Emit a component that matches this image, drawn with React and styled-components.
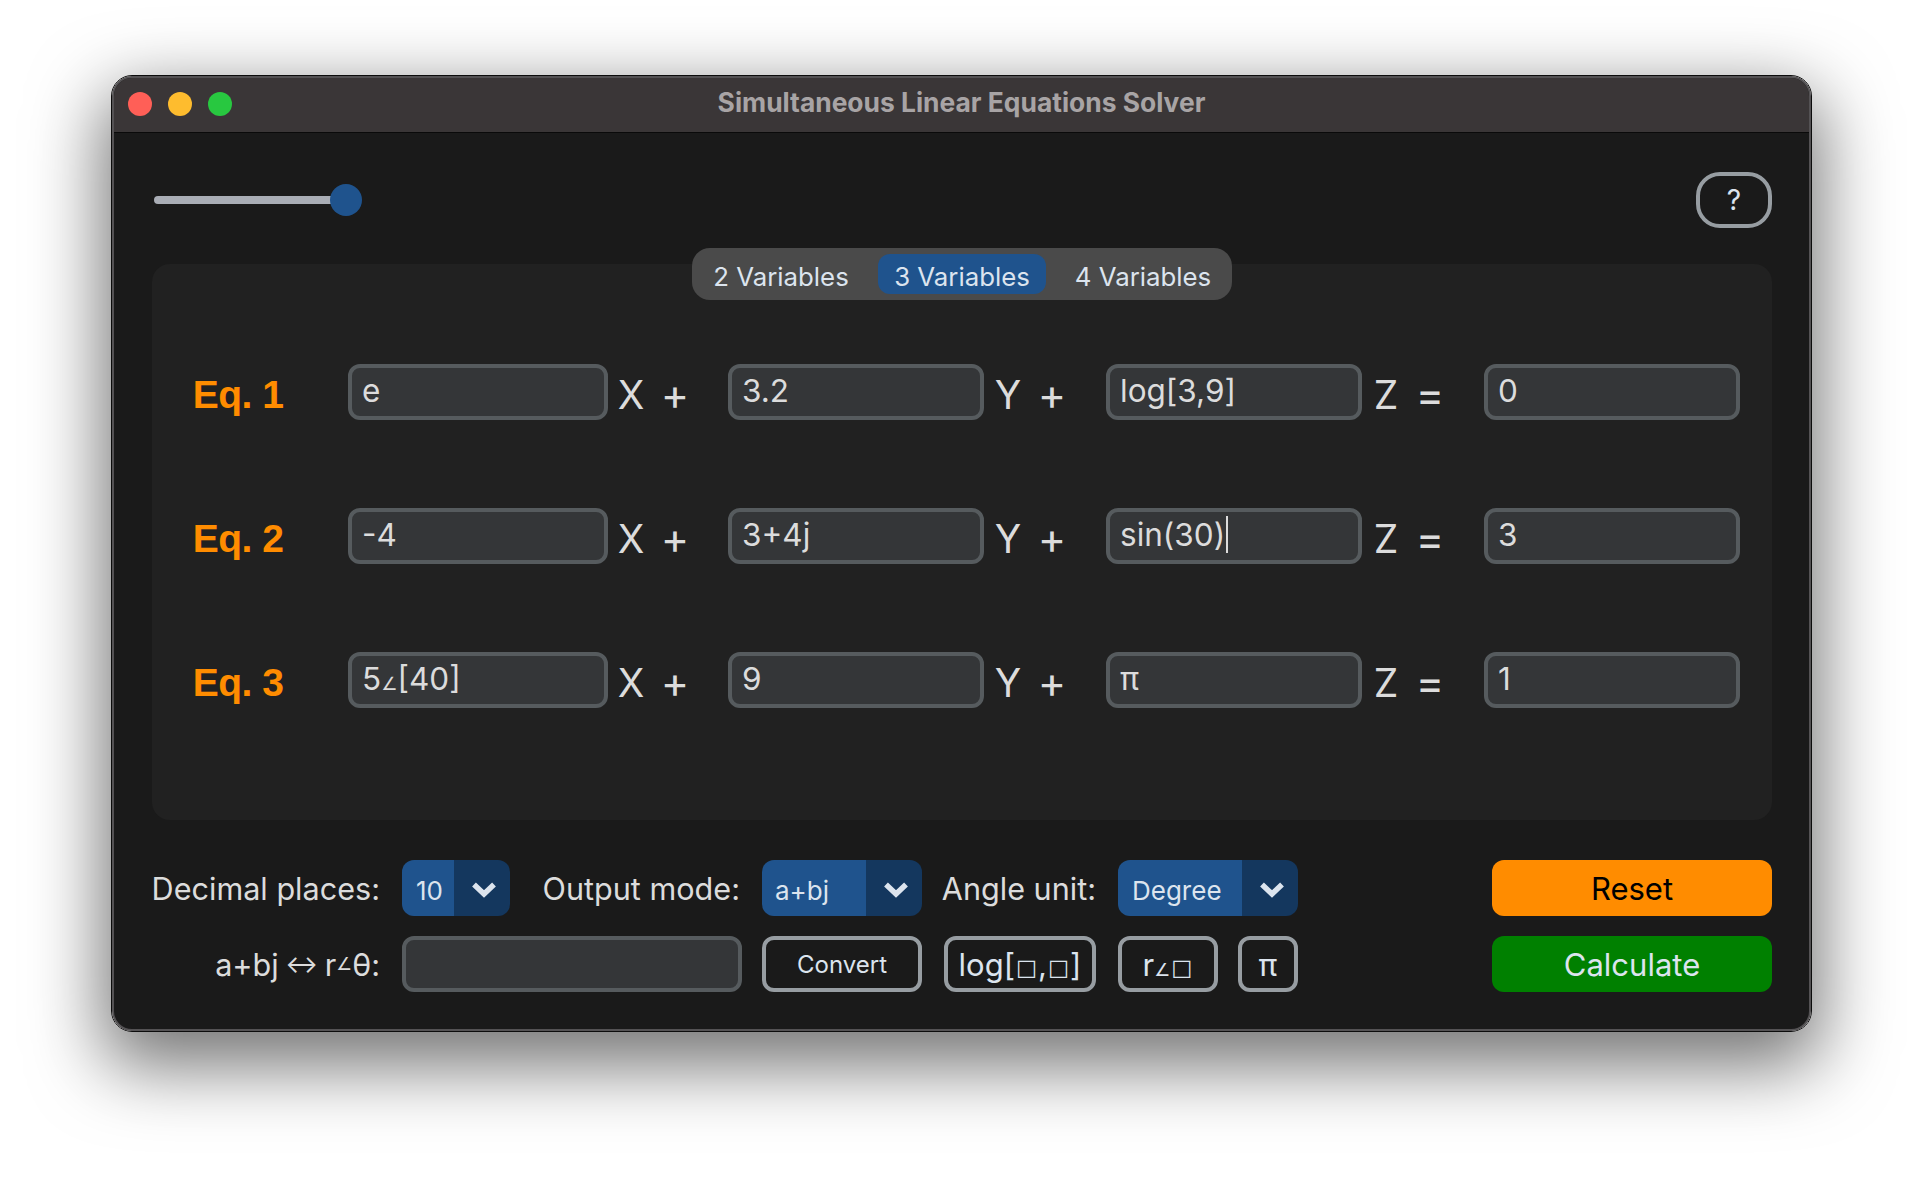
import React from "react";
import styled, { createGlobalStyle } from "styled-components";

const GlobalStyle = createGlobalStyle`
  html, body { margin: 0; padding: 0; background: #fff; }
  body { font-family: Inter, "Liberation Sans", sans-serif; overflow: hidden; }
`;

const Page = styled.div`
  width: 1924px;
  height: 1180px;
  padding: 75px 0 0 111px;
  box-sizing: border-box;
`;

const Window = styled.div`
  width: 1701px;
  box-sizing: border-box;
  border: 1px solid #0c0c0c;
  border-radius: 21px;
  box-shadow: 0 26px 72px 8px rgba(0, 0, 0, 0.55);
`;

const Frame = styled.div`
  border: 2px solid #545254;
  border-radius: 20px;
  overflow: hidden;
  background: #1a1a1a;
`;

const TitleBar = styled.div`
  height: 54px;
  border-bottom: 1px solid #0a0a0a;
  background: #3a3637;
  display: flex;
  align-items: center;
  position: relative;
  padding-left: 14px;
  gap: 16px;
`;

const Light = styled.span`
  width: 24px;
  height: 24px;
  margin-top: -2px;
  border-radius: 50%;
  background: ${(p) => p.$color};
`;

const Title = styled.div`
  position: absolute;
  left: 0;
  right: 0;
  text-align: center;
  font-size: 26.4px;
  font-weight: 700;
  color: #a8a4a5;
  margin-top: -6px;
`;

const Body = styled.div`
  padding: 39px 37px 37px 38px;
`;

const TopBar = styled.div`
  display: flex;
  justify-content: space-between;
  align-items: center;
  height: 56px;
`;

const Slider = styled.div`
  width: 208px;
  height: 32px;
  display: flex;
  align-items: center;
  justify-content: flex-end;
  position: relative;
  margin-left: 2px;
`;

const Track = styled.div`
  position: absolute;
  left: 0;
  right: 8px;
  height: 8px;
  border-radius: 4px;
  background: #a9adb5;
`;

const Thumb = styled.div`
  width: 32px;
  height: 32px;
  border-radius: 50%;
  background: #1f538d;
  position: relative;
`;

const HelpButton = styled.button`
  width: 76px;
  height: 56px;
  box-sizing: border-box;
  border: 4px solid #979da2;
  border-radius: 24px;
  background: transparent;
  color: #dce4ee;
  font-family: inherit;
  font-size: 28px;
  padding: 0;
`;

const Panel = styled.div`
  margin-top: 36px;
  height: 556px;
  background: #212121;
  border-radius: 18px;
`;

const Tabs = styled.div`
  width: 540px;
  height: 52px;
  box-sizing: border-box;
  margin: 0 auto;
  position: relative;
  top: -16px;
  background: #4a4a4a;
  border-radius: 18px;
  display: flex;
  align-items: center;
  justify-content: center;
`;

const Tab = styled.div`
  width: 168px;
  height: 40px;
  margin: 0 ${(p) => (p.$active ? "13px" : "0")};
  padding-top: 5px;
  box-sizing: border-box;
  display: flex;
  align-items: center;
  justify-content: center;
  border-radius: 12px;
  background: ${(p) => (p.$active ? "#1f538d" : "transparent")};
  color: #dce4ee;
  font-size: 25.8px;
  white-space: nowrap;
`;

const Equations = styled.div`
  margin-top: 48px;
  display: flex;
  flex-direction: column;
  gap: 88px;
`;

const EquationRow = styled.div`
  display: flex;
  align-items: center;
  height: 56px;
`;

const EqLabel = styled.div`
  width: 196px;
  box-sizing: border-box;
  padding-right: 24px;
  padding-top: 5px;
  text-align: center;
  color: #ff8c00;
  font-size: 39px;
  font-weight: 700;
  letter-spacing: -0.5px;
  font-family: "Liberation Sans", sans-serif;
`;

const Field = styled.div`
  width: ${(p) => p.$width || 256}px;
  height: 56px;
  box-sizing: border-box;
  border: 4px solid #565b5e;
  border-radius: 12px;
  background: #343638;
  color: #dcdcdc;
  font-size: 31.5px;
  line-height: 45px;
  padding-left: 10px;
  white-space: nowrap;
`;

const Caret = styled.span`
  display: inline-block;
  width: 2px;
  height: 37px;
  margin-left: 1px;
  vertical-align: -7px;
  background: #dcdcdc;
`;

const Term = styled.div`
  width: ${(p) => p.$width}px;
  margin-left: ${(p) => p.$nudge || 0}px;
  display: flex;
  align-items: center;
  color: #dcdcdc;
`;

const Variable = styled.span`
  width: 48px;
  text-align: center;
  font-size: 39px;
  padding-top: 5px;
`;

const Operator = styled.span`
  width: 40px;
  text-align: center;
  font-size: 43px;
  padding-top: 3px;
`;

const Small = styled.span`
  font-size: 0.58em;
  font-family: "DejaVu Sans", sans-serif;
`;

const Arrow = styled.span`
  font-size: 0.8em;
  margin: 0 -2px;
`;

const Blank = styled.span`
  font-size: 0.72em;
  margin: 0 1px;
  position: relative;
  top: -1px;
  font-family: "DejaVu Sans", sans-serif;
`;

const Footer = styled.div`
  margin-top: 40px;
  display: flex;
  justify-content: space-between;
`;

const Controls = styled.div`
  display: grid;
  grid-template-columns: 228px 338px 160px 152px 180px;
  grid-auto-rows: 56px;
  column-gap: 22px;
  row-gap: 20px;
`;

const Label = styled.div`
  display: flex;
  align-items: center;
  justify-content: flex-end;
  color: #dcdcdc;
  font-size: 30.6px;
  white-space: pre;
`;

const Cell = styled.div`
  display: flex;
  justify-content: space-between;
  align-items: center;
`;

const Select = styled.div`
  width: ${(p) => p.$width}px;
  height: 56px;
  display: flex;
  border-radius: 12px;
  overflow: hidden;
  color: #dce4ee;
  font-size: 26px;
`;

const SelectValue = styled.div`
  flex: 1;
  background: #1f538d;
  padding: 5px 0 0 ${(p) => p.$pad || 14}px;
  line-height: 51px;
`;

const SelectArrow = styled.div`
  width: 56px;
  background: #14375e;
  display: flex;
  align-items: center;
  justify-content: center;
  padding: 2px 0 0 3px;
  box-sizing: border-box;
`;

const Chevron = () => (
  <svg width="26" height="17" viewBox="0 0 26 17">
    <polyline points="3,3.5 13,13 23,3.5" fill="none" stroke="#dce4ee" strokeWidth="5.5" />
  </svg>
);

const OutlineButton = styled.button`
  width: ${(p) => (p.$width ? `${p.$width}px` : "100%")};
  height: 56px;
  box-sizing: border-box;
  border: 4px solid #979da2;
  border-radius: 12px;
  background: transparent;
  color: #dce4ee;
  font-family: inherit;
  font-size: ${(p) => p.$size || 31}px;
  padding: 0;
  white-space: nowrap;
`;

const Actions = styled.div`
  width: 280px;
  display: flex;
  flex-direction: column;
  gap: 20px;
`;

const ActionButton = styled.button`
  height: 56px;
  border: 0;
  border-radius: 12px;
  padding: 0;
  font-family: inherit;
  font-size: 31px;
  background: ${(p) => p.$bg};
  color: ${(p) => p.$color};
`;

const equations = [
  { name: "Eq. 1", values: ["e", "3.2", "log[3,9]", "0"] },
  { name: "Eq. 2", values: ["-4", "3+4j", "sin(30)", "3"], caret: 2 },
  { name: "Eq. 3", values: [<>5<Small>∠</Small>[40]</>, "9", "π", "1"] },
];

export default function App() {
  return (
    <>
      <GlobalStyle />
      <Page>
        <Window>
          <Frame>
            <TitleBar>
              <Light $color="#ff5f57" />
              <Light $color="#febc2e" />
              <Light $color="#28c840" />
              <Title>Simultaneous Linear Equations Solver</Title>
            </TitleBar>
            <Body>
              <TopBar>
                <Slider>
                  <Track />
                  <Thumb />
                </Slider>
                <HelpButton>?</HelpButton>
              </TopBar>
              <Panel>
                <Tabs>
                  <Tab>2 Variables</Tab>
                  <Tab $active>3 Variables</Tab>
                  <Tab>4 Variables</Tab>
                </Tabs>
                <Equations>
                  {equations.map((eq) => (
                    <EquationRow key={eq.name}>
                      <EqLabel>{eq.name}</EqLabel>
                      <Field $width={260}>{eq.values[0]}</Field>
                      <Term $width={121} $nudge={-1}>
                        <Variable>X</Variable>
                        <Operator>+</Operator>
                      </Term>
                      <Field>{eq.values[1]}</Field>
                      <Term $width={122}>
                        <Variable>Y</Variable>
                        <Operator>+</Operator>
                      </Term>
                      <Field>
                        {eq.values[2]}
                        {eq.caret === 2 && <Caret />}
                      </Field>
                      <Term $width={122}>
                        <Variable>Z</Variable>
                        <Operator>=</Operator>
                      </Term>
                      <Field>{eq.values[3]}</Field>
                    </EquationRow>
                  ))}
                </Equations>
              </Panel>
              <Footer>
                <Controls>
                  <Label>Decimal places:</Label>
                  <Cell>
                    <Select $width={108}>
                      <SelectValue>10</SelectValue>
                      <SelectArrow><Chevron /></SelectArrow>
                    </Select>
                    <Label>Output mode:</Label>
                  </Cell>
                  <Select $width={160}>
                    <SelectValue $pad={13}>a+bj</SelectValue>
                    <SelectArrow><Chevron /></SelectArrow>
                  </Select>
                  <Label>Angle unit:</Label>
                  <Select $width={180}>
                    <SelectValue>Degree</SelectValue>
                    <SelectArrow><Chevron /></SelectArrow>
                  </Select>

                  <Label>a+bj <Arrow>↔</Arrow> r<Small>∠</Small>θ:</Label>
                  <Field $width={340} />
                  <OutlineButton $size={24}>Convert</OutlineButton>
                  <OutlineButton>log[<Blank>□</Blank>,<Blank>□</Blank>]</OutlineButton>
                  <Cell>
                    <OutlineButton $width={100}>r<Small>∠</Small><Blank>□</Blank></OutlineButton>
                    <OutlineButton $width={60}>π</OutlineButton>
                  </Cell>
                </Controls>
                <Actions>
                  <ActionButton $bg="#ff8c00" $color="#000">Reset</ActionButton>
                  <ActionButton $bg="#008000" $color="#dce4ee">Calculate</ActionButton>
                </Actions>
              </Footer>
            </Body>
          </Frame>
        </Window>
      </Page>
    </>
  );
}
